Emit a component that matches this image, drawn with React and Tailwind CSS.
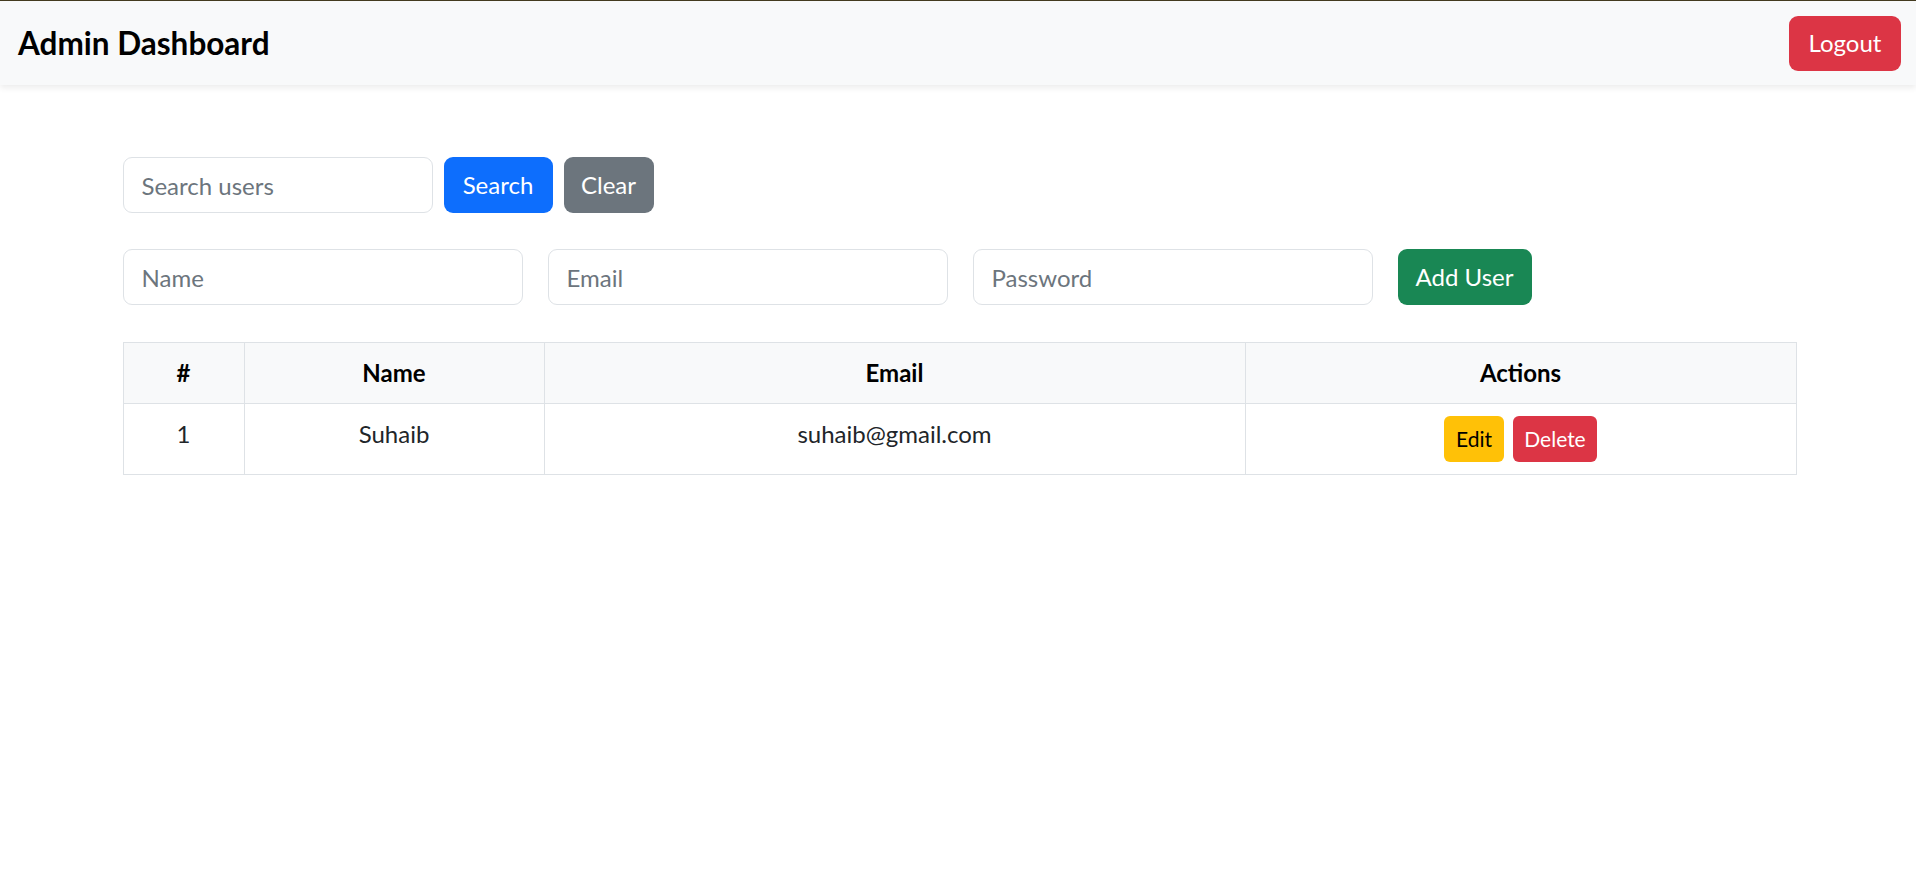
import React, { useState } from 'react';

const users = [{ id: 1, name: 'Suhaib', email: 'suhaib@gmail.com' }];

const inputCls =
    'h-[56px] rounded-[9px] border border-[#dee2e6] bg-white px-[18px] text-[24px] text-[#212529] placeholder:text-[#6c757d] outline-none';

const App = () => {
    const [query, setQuery] = useState('');

    return (
        <div className="min-h-screen bg-white font-[Lato,sans-serif] text-[#212529]">
            {/* top nav */}
            <nav className="flex h-[85px] items-center justify-between border-t border-[#433a1f] bg-[#f8f9fa] pl-[18px] pr-[15px] shadow-[0_3px_6px_rgba(0,0,0,0.075)]">
                <span className="text-[31.5px] font-bold leading-[45px] text-black">Admin Dashboard</span>
                <button className="h-[55px] w-[112px] rounded-[9px] bg-[#dc3545] text-[24px] text-white">Logout</button>
            </nav>

            <div className="mx-auto mt-[72px] w-[1673px] pl-[1px]">
                {/* search */}
                <div className="flex items-center gap-[11px]">
                    <input
                        className={`${inputCls} w-[310px]`}
                        placeholder="Search users"
                        value={query}
                        onChange={e => setQuery(e.target.value)}
                    />
                    <button className="h-[56px] w-[109px] rounded-[9px] bg-[#0d6efd] text-[24px] text-white">Search</button>
                    <button className="h-[56px] w-[90px] rounded-[9px] bg-[#6c757d] text-[24px] text-white">Clear</button>
                </div>

                {/* add user */}
                <div className="mt-[36px] flex items-center gap-[25px]">
                    <input className={`${inputCls} w-[400px]`} placeholder="Name" />
                    <input className={`${inputCls} w-[400px]`} placeholder="Email" />
                    <input className={`${inputCls} w-[400px]`} type="password" placeholder="Password" />
                    <button className="h-[56px] w-[134px] rounded-[9px] bg-[#198754] text-[24px] text-white">Add User</button>
                </div>

                {/* users table */}
                <table className="mt-[37px] w-[1673px] table-fixed border-collapse text-center text-[24px]">
                    <colgroup>
                        <col className="w-[121px]" />
                        <col className="w-[300px]" />
                        <col className="w-[701px]" />
                        <col className="w-[551px]" />
                    </colgroup>
                    <thead>
                        <tr className="bg-[#f8f9fa] text-black">
                            <th className="h-[61px] border border-[#dee2e6] px-[12px] font-bold">#</th>
                            <th className="border border-[#dee2e6] px-[12px] font-bold">Name</th>
                            <th className="border border-[#dee2e6] px-[12px] font-bold">Email</th>
                            <th className="border border-[#dee2e6] px-[12px] font-bold">Actions</th>
                        </tr>
                    </thead>
                    <tbody>
                        {users.map((u, i) => (
                            <tr key={u.id}>
                                <td className="border border-[#dee2e6] p-[12px] align-top leading-[36px]">{i + 1}</td>
                                <td className="border border-[#dee2e6] p-[12px] align-top leading-[36px]">{u.name}</td>
                                <td className="border border-[#dee2e6] p-[12px] align-top leading-[36px]">{u.email}</td>
                                <td className="border border-[#dee2e6] p-[12px]">
                                    <div className="flex justify-center gap-[9px]">
                                        <button className="h-[46px] w-[60px] rounded-[6px] bg-[#ffc107] text-[21px] text-black">Edit</button>
                                        <button className="h-[46px] w-[84px] rounded-[6px] bg-[#dc3545] text-[21px] text-white">Delete</button>
                                    </div>
                                </td>
                            </tr>
                        ))}
                    </tbody>
                </table>
            </div>
        </div>
    );
};

export default App;
